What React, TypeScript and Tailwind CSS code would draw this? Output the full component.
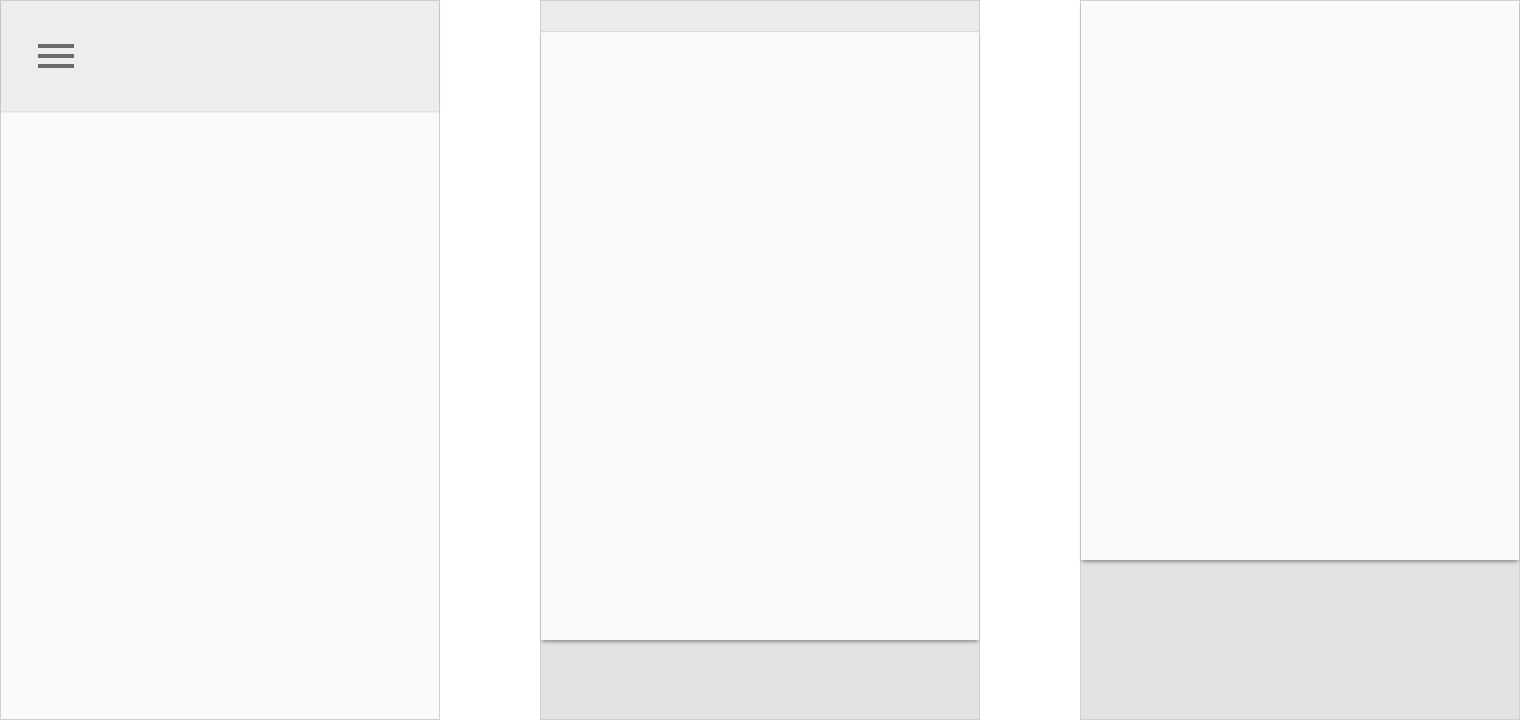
import React from "react";

export default function App() {
    return (
        <div className="w-[1520px] h-[720px] bg-white flex gap-[100px] overflow-hidden">
            {/* Panel 1: header with menu */}
            <div className="w-[440px] h-[720px] border border-[#cfcfcf] flex flex-col bg-[#fafafa]">
                <div className="h-[110px] shrink-0 bg-[#ededed] pt-[43px] pl-[37px] relative z-10 shadow-[0_1px_2px_rgba(0,0,0,0.15)]">
                    <div className="flex flex-col gap-[6px]">
                        <div className="w-[36px] h-[4px] bg-[#6b6b6b]"></div>
                        <div className="w-[36px] h-[4px] bg-[#6b6b6b]"></div>
                        <div className="w-[36px] h-[4px] bg-[#6b6b6b]"></div>
                    </div>
                </div>
                <div className="flex-1 bg-[#fafafa]"></div>
            </div>

            {/* Panel 2: thin top bar, sheet, footer */}
            <div className="w-[440px] h-[720px] border border-[#cfcfcf] flex flex-col bg-[#e2e2e2]">
                <div className="h-[31px] shrink-0 bg-[#ebebeb] border-b border-[#d9d9d9]"></div>
                <div className="h-[608px] shrink-0 bg-[#f9f9f9] relative z-10 shadow-[0_3px_3px_-1px_rgba(0,0,0,0.35)]"></div>
                <div className="flex-1 bg-[#e2e2e2]"></div>
            </div>

            {/* Panel 3: sheet and footer */}
            <div className="w-[440px] h-[720px] border border-[#cfcfcf] flex flex-col bg-[#e2e2e2]">
                <div className="h-[559px] shrink-0 bg-[#fafafa] relative z-10 shadow-[0_3px_3px_-1px_rgba(0,0,0,0.35)]"></div>
                <div className="flex-1 bg-[#e2e2e2]"></div>
            </div>
        </div>
    );
}
